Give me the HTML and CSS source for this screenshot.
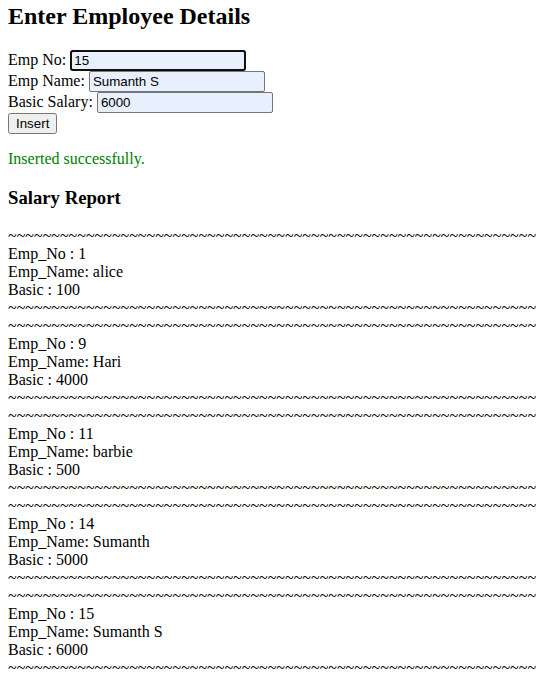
FILE: index.html
```html
<!DOCTYPE html>
<html lang="en">
<head>
  <meta charset="UTF-8" />
  <title>Employee Details</title>
  <link rel="stylesheet" href="styles.css">
</head>
<body>

<h2 class="page-title">Enter Employee Details</h2>

<form class="emp-form" onsubmit="event.preventDefault();">
  Emp No: <input type="text" class="field field-focus" name="empno" value="15"><br>
  Emp Name: <input type="text" class="field" name="empname" value="Sumanth S"><br>
  Basic Salary: <input type="text" class="field" name="basic" value="6000"><br>
  <button type="submit" class="btn">Insert</button>
</form>

<p class="msg">Inserted successfully.</p>

<h3 class="report-title">Salary Report</h3>

<div class="report">
~~~~~~~~~~~~~~~~~~~~~~~~~~~~~~~~~~~~~~~~~~~~~~~~~~~~~~~~~~~~~<br>
Emp_No : 1<br>
Emp_Name: alice<br>
Basic : 100<br>
~~~~~~~~~~~~~~~~~~~~~~~~~~~~~~~~~~~~~~~~~~~~~~~~~~~~~~~~~~~~~<br>
~~~~~~~~~~~~~~~~~~~~~~~~~~~~~~~~~~~~~~~~~~~~~~~~~~~~~~~~~~~~~<br>
Emp_No : 9<br>
Emp_Name: Hari<br>
Basic : 4000<br>
~~~~~~~~~~~~~~~~~~~~~~~~~~~~~~~~~~~~~~~~~~~~~~~~~~~~~~~~~~~~~<br>
~~~~~~~~~~~~~~~~~~~~~~~~~~~~~~~~~~~~~~~~~~~~~~~~~~~~~~~~~~~~~<br>
Emp_No : 11<br>
Emp_Name: barbie<br>
Basic : 500<br>
~~~~~~~~~~~~~~~~~~~~~~~~~~~~~~~~~~~~~~~~~~~~~~~~~~~~~~~~~~~~~<br>
~~~~~~~~~~~~~~~~~~~~~~~~~~~~~~~~~~~~~~~~~~~~~~~~~~~~~~~~~~~~~<br>
Emp_No : 14<br>
Emp_Name: Sumanth<br>
Basic : 5000<br>
~~~~~~~~~~~~~~~~~~~~~~~~~~~~~~~~~~~~~~~~~~~~~~~~~~~~~~~~~~~~~<br>
~~~~~~~~~~~~~~~~~~~~~~~~~~~~~~~~~~~~~~~~~~~~~~~~~~~~~~~~~~~~~<br>
Emp_No : 15<br>
Emp_Name: Sumanth S<br>
Basic : 6000<br>
~~~~~~~~~~~~~~~~~~~~~~~~~~~~~~~~~~~~~~~~~~~~~~~~~~~~~~~~~~~~~<br>
</div>

</body>
</html>
```

FILE: styles.css
```css
html {
  overflow: hidden;
}

body {
  margin: 0 8px;
  font-family: "Liberation Serif", "Times New Roman", serif;
  font-size: 16px;
  color: #000;
  background: #fff;
}

.page-title {
  font-size: 24px;
  margin: 3px 0 19.92px 0;
}

.emp-form {
  margin: 0;
}

.field {
  box-sizing: border-box;
  width: 176px;
  font-family: "Liberation Sans", Arial, sans-serif;
  font-size: 13.333px;
  color: #000;
  background-color: #e8f0fe;
  border: 1px solid #767676;
  border-radius: 2px;
  padding: 2px 3px;
  margin: 0;
}

.field-focus {
  outline: 2px solid #101010;
  outline-offset: -2px;
  border-radius: 3px;
}

.btn {
  font-family: "Liberation Sans", Arial, sans-serif;
  font-size: 13.333px;
  margin: 0;
}

.msg {
  color: green;
  margin: 16px 0;
}

.report-title {
  font-size: 18.72px;
  margin: 18.72px 0;
}

.report {
  white-space: nowrap;
}
```
